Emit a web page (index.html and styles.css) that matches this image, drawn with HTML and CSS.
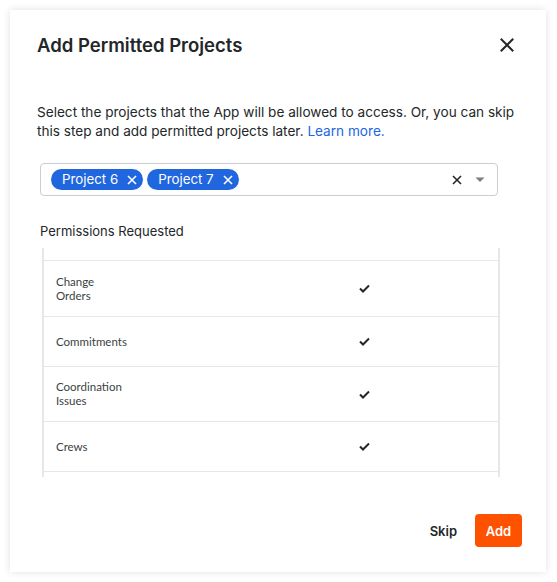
FILE: index.html
```html
<!DOCTYPE html>
<html>
<head>
<meta charset="utf-8">
<link rel="stylesheet" href="styles.css">
</head>
<body>
<div class="modal">
  <div class="header">
    <h1 class="title">Add Permitted Projects</h1>
    <button class="close" aria-label="Close">
      <svg width="14" height="14" viewBox="0 0 14 14"><path d="M1.5 1.5L12.5 12.5M12.5 1.5L1.5 12.5" stroke="#232729" stroke-width="2" fill="none" stroke-linecap="square"/></svg>
    </button>
  </div>
  <p class="desc">Select the projects that the App will be allowed to access. Or, you can skip this step and add permitted projects later. <a href="#" class="link">Learn more.</a></p>
  <div class="select">
    <div class="chips">
      <span class="chip">Project 6
        <svg class="chip-x" width="10" height="10" viewBox="0 0 10 10"><path d="M1 1L9 9M9 1L1 9" stroke="#fff" stroke-width="1.6" fill="none"/></svg>
      </span>
      <span class="chip">Project 7
        <svg class="chip-x" width="10" height="10" viewBox="0 0 10 10"><path d="M1 1L9 9M9 1L1 9" stroke="#fff" stroke-width="1.6" fill="none"/></svg>
      </span>
    </div>
    <div class="controls">
      <svg width="10" height="10" viewBox="0 0 10 10"><path d="M1 1L9 9M9 1L1 9" stroke="#232729" stroke-width="1.6" fill="none"/></svg>
      <svg width="10" height="6" viewBox="0 0 10 6"><path d="M0.5 0.5H9.5L5 5Z" fill="#75808a"/></svg>
    </div>
  </div>
  <div class="perm-label">Permissions Requested</div>
  <div class="table">
    <div class="row-tail"></div>
    <div class="row two">
      <div class="cell-name">Change Orders</div>
      <div class="cell-check"><svg width="11" height="9" viewBox="0 0 11 9"><path d="M1 4.5L4 7.5L10 1.5" stroke="#232729" stroke-width="2" fill="none"/></svg></div>
    </div>
    <div class="row">
      <div class="cell-name">Commitments</div>
      <div class="cell-check"><svg width="11" height="9" viewBox="0 0 11 9"><path d="M1 4.5L4 7.5L10 1.5" stroke="#232729" stroke-width="2" fill="none"/></svg></div>
    </div>
    <div class="row two">
      <div class="cell-name">Coordination Issues</div>
      <div class="cell-check"><svg width="11" height="9" viewBox="0 0 11 9"><path d="M1 4.5L4 7.5L10 1.5" stroke="#232729" stroke-width="2" fill="none"/></svg></div>
    </div>
    <div class="row">
      <div class="cell-name">Crews</div>
      <div class="cell-check"><svg width="11" height="9" viewBox="0 0 11 9"><path d="M1 4.5L4 7.5L10 1.5" stroke="#232729" stroke-width="2" fill="none"/></svg></div>
    </div>
    <div class="row"></div>
  </div>
  <div class="footer">
    <button class="btn-skip">Skip</button>
    <button class="btn-add">Add</button>
  </div>
</div>
</body>
</html>
```
FILE: styles.css
```css
* { box-sizing: border-box; }
html, body { margin: 0; padding: 0; background: #fff; }
body {
  font-family: Inter, "Noto Sans", sans-serif;
  color: #232729;
  padding: 10px 11px 10px 10px;
}
.modal {
  width: 536px;
  height: 562px;
  background: #fff;
  box-shadow: 0 0 8px rgba(0,0,0,0.12);
  display: flex;
  flex-direction: column;
  padding: 23px 0 0 0;
  overflow: hidden;
}
.header {
  display: flex;
  align-items: center;
  justify-content: space-between;
  padding: 0 32px 0 27px;
}
.title {
  margin: 0;
  font-size: 18.5px;
  line-height: 24px;
  font-weight: 600;
  color: #232729;
}
.close {
  border: 0;
  background: none;
  padding: 0;
  width: 14px;
  height: 14px;
  display: flex;
}
.desc {
  margin: 46px 14px 0 27px;
  font-size: 13.6px;
  line-height: 19px;
  color: #232729;
}
.link { color: #2066df; text-decoration: none; }
.select {
  margin: 22px 0 0 30px;
  width: 458px;
  height: 33px;
  border: 1px solid #c9ced2;
  border-radius: 4px;
  display: flex;
  align-items: center;
  justify-content: space-between;
  padding: 0 12px 0 10px;
}
.chips { display: flex; gap: 4px; }
.chip {
  display: inline-flex;
  align-items: center;
  gap: 9px;
  height: 21px;
  padding: 0 6px 0 11px;
  border-radius: 11px;
  background: #2066df;
  color: #fff;
  font-size: 13.3px;
  line-height: 21px;
}
.controls { display: flex; align-items: center; gap: 13px; }
.perm-label {
  margin: 26px 0 0 30px;
  font-size: 13px;
  line-height: 18px;
  color: #232729;
}
.table {
  margin: 8px 0 0 32px;
  width: 458px;
  height: 229px;
  border-left: 2px solid #e6e7e8;
  border-right: 2px solid #e6e7e8;
  overflow: hidden;
  font-family: Lato, "Noto Sans", sans-serif;
  font-size: 11.5px;
  color: #3a3f42;
}
.row-tail { height: 13px; border-bottom: 1px solid #e3e8e8; }
.row {
  display: flex;
  align-items: center;
  height: 50px;
  border-bottom: 1px solid #e3e8e8;
}
.row.two { height: 56px; }
.row.two + .row + .row.two { height: 55px; }
.cell-name {
  width: 290px;
  padding-left: 12px;
  padding-right: 208px;
  line-height: 14px;
}
.cell-check {
  width: 60px;
  display: flex;
  justify-content: center;
}
.footer {
  margin-top: auto;
  display: flex;
  justify-content: flex-end;
  align-items: center;
  gap: 18px;
  padding: 0 24px 25px 0;
}
.btn-skip {
  border: 0;
  background: none;
  font-family: Inter, "Noto Sans", sans-serif;
  font-size: 13px;
  font-weight: 600;
  color: #232729;
  padding: 0;
}
.btn-add {
  border: 0;
  background: #ff5200;
  color: #fff;
  font-family: Inter, "Noto Sans", sans-serif;
  font-size: 13px;
  font-weight: 600;
  width: 47px;
  height: 33px;
  border-radius: 4px;
  padding: 0;
}
```
